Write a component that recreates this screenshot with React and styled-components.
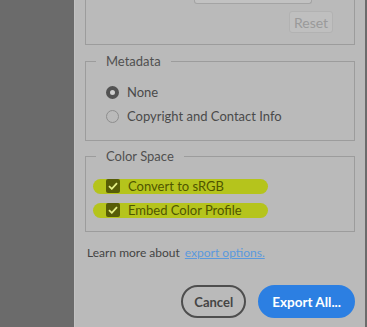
import styled, { createGlobalStyle } from 'styled-components';

const GlobalStyle = createGlobalStyle`
  html, body {
    margin: 0;
    padding: 0;
    height: 100%;
    overflow: hidden;
    background: #6b6b6b;
  }
  #root {
    height: 100%;
  }
`;

const Screen = styled.div`
  display: flex;
  height: 327px;
  width: 367px;
  background: #6b6b6b;
  font-family: Lato, "Open Sans", sans-serif;
  font-size: 13px;
  color: #4a4a4a;
`;

const Backdrop = styled.div`
  width: 74px;
  flex: none;
`;

const Panel = styled.div`
  flex: 1;
  display: flex;
  flex-direction: column;
  background: #bababa;
  border-left: 1px solid #c2c2c2;
  margin-right: 2px;
  padding: 0 10px;
`;

const TopBox = styled.div`
  display: flex;
  flex-direction: column;
  align-items: flex-end;
  border: 1px solid #9c9c9c;
  border-top: none;
  height: 44px;
`;

const InputStub = styled.div`
  width: 116px;
  height: 3px;
  margin-right: 42px;
  background: #c2c2c2;
  border: 1px solid #a4a4a4;
  border-top: none;
  border-radius: 0 0 3px 3px;
`;

const GhostButton = styled.button`
  margin: 7px 21px 0 0;
  width: 44px;
  height: 22px;
  padding: 0;
  border: 1px solid #b2b2b2;
  border-radius: 3px;
  background: #bfbfbf;
  color: #9a9a9a;
  font-family: inherit;
  font-size: 14px;
`;

const Group = styled.fieldset`
  margin: ${(p) => p.$gap}px 0 0;
  padding: ${(p) => p.$pad};
  border: 1px solid #9c9c9c;
  min-width: 0;
`;

const Legend = styled.legend`
  margin-left: 10px;
  padding: 0 10px;
  line-height: 16px;
  color: #505050;
`;

const Row = styled.label`
  display: flex;
  align-items: center;
  height: 24px;
  padding-left: 20px;
  gap: 8px;
  color: #4a4a4a;
`;

const Radio = styled.span`
  width: 13px;
  height: 13px;
  box-sizing: border-box;
  border-radius: 50%;
  border: ${(p) => (p.$on ? '4.5px solid #535353' : '1px solid #8e8e8e')};
  background: ${(p) => (p.$on ? '#cfcfcf' : 'transparent')};
`;

const CheckRow = styled.div`
  display: flex;
  align-items: center;
  height: 24px;
  padding-left: 7px;
`;

const Pill = styled.span`
  display: flex;
  align-items: center;
  gap: 8px;
  width: 175px;
  height: 15px;
  padding-left: 13px;
  box-sizing: border-box;
  border-radius: 8px;
  background: #b5c41c;
  color: #4f5500;
`;

const Box = styled.span`
  width: 14px;
  height: 14px;
  border-radius: 2px;
  background: #575d06;
  display: flex;
  align-items: center;
  justify-content: center;
  flex: none;
`;

const Note = styled.p`
  margin: 13px 0 0 2px;
  line-height: 16px;
  font-size: 12px;
  color: #444;
`;

const Link = styled.a`
  margin-left: 5px;
  color: #5b99dd;
  text-decoration: underline;
`;

const Actions = styled.div`
  display: flex;
  justify-content: flex-end;
  gap: 12px;
  margin-top: 24px;
`;

const Button = styled.button`
  height: 33px;
  padding: 0 ${(p) => (p.$primary ? 12 : 11)}px;
  border-radius: 17px;
  font-family: inherit;
  font-size: ${(p) => (p.$primary ? 13.5 : 13)}px;
  font-weight: 700;
  border: 2px solid ${(p) => (p.$primary ? '#2c7fe2' : '#4e4e4e')};
  background: ${(p) => (p.$primary ? '#2c7fe2' : 'transparent')};
  color: ${(p) => (p.$primary ? '#fff' : '#454545')};
`;

const Tick = () => (
  <svg width="10" height="8" viewBox="0 0 10 8">
    <path d="M1 4.2 L3.8 6.8 L9 1.2" fill="none" stroke="#e4ef86" strokeWidth="1.8" />
  </svg>
);

const App = () => {
  return (
    <>
      <GlobalStyle />
      <Screen>
        <Backdrop />
        <Panel>
          <TopBox>
            <InputStub />
            <GhostButton disabled>Reset</GhostButton>
          </TopBox>

          <Group $gap={8} $pad="11px 0 12px">
            <Legend>Metadata</Legend>
            <Row>
              <Radio $on />
              None
            </Row>
            <Row>
              <Radio />
              Copyright and Contact Info
            </Row>
          </Group>

          <Group $gap={7} $pad="10px 0 9px">
            <Legend>Color Space</Legend>
            <CheckRow>
              <Pill>
                <Box><Tick /></Box>
                Convert to sRGB
              </Pill>
            </CheckRow>
            <CheckRow>
              <Pill>
                <Box><Tick /></Box>
                Embed Color Profile
              </Pill>
            </CheckRow>
          </Group>

          <Note>
            Learn more about
            <Link href="#">export options.</Link>
          </Note>

          <Actions>
            <Button>Cancel</Button>
            <Button $primary>Export All...</Button>
          </Actions>
        </Panel>
      </Screen>
    </>
  );
};

export default App;
